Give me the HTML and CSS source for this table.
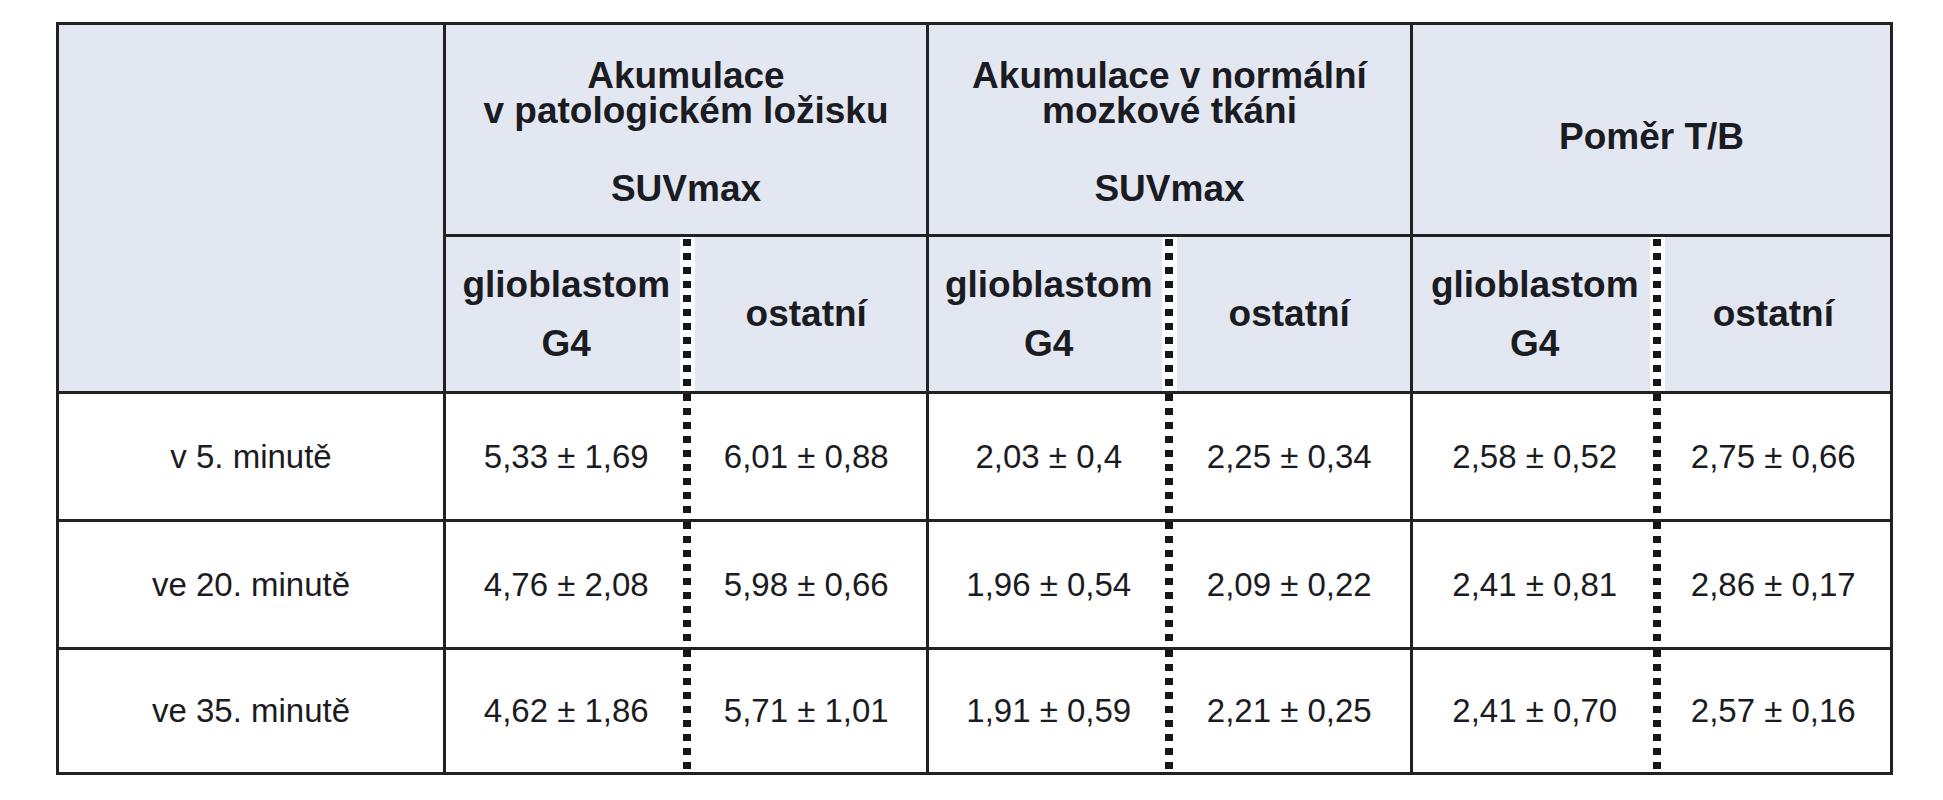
FILE: index.html
```html
<!DOCTYPE html>
<html lang="cs">
<head>
<meta charset="utf-8">
<title>Tabulka SUVmax</title>
<link rel="stylesheet" href="styles.css">
</head>
<body>
<table class="tbl">
  <colgroup>
    <col class="c-label">
    <col class="c-a"><col class="c-b">
    <col class="c-c"><col class="c-d">
    <col class="c-e"><col class="c-f">
  </colgroup>
  <thead>
    <tr class="h1">
      <th class="corner" rowspan="2"></th>
      <th class="grp" colspan="2">
        <span class="grp-title">Akumulace<br>v patologickém ložisku</span>
        <span class="grp-unit">SUVmax</span>
      </th>
      <th class="grp" colspan="2">
        <span class="grp-title">Akumulace v normální<br>mozkové tkáni</span>
        <span class="grp-unit">SUVmax</span>
      </th>
      <th class="grp grp-ratio" colspan="2">Poměr T/B</th>
    </tr>
    <tr class="h2">
      <th class="sub sub-l"><span class="two">glioblastom<br>G4</span></th>
      <th class="sub sub-r">ostatní</th>
      <th class="sub sub-l"><span class="two">glioblastom<br>G4</span></th>
      <th class="sub sub-r">ostatní</th>
      <th class="sub sub-l"><span class="two">glioblastom<br>G4</span></th>
      <th class="sub sub-r">ostatní</th>
    </tr>
  </thead>
  <tbody>
    <tr class="row">
      <td class="label">v 5. minutě</td>
      <td class="val val-l">5,33 ± 1,69</td>
      <td class="val val-r">6,01 ± 0,88</td>
      <td class="val val-l">2,03 ± 0,4</td>
      <td class="val val-r">2,25 ± 0,34</td>
      <td class="val val-l">2,58 ± 0,52</td>
      <td class="val val-r">2,75 ± 0,66</td>
    </tr>
    <tr class="row">
      <td class="label">ve 20. minutě</td>
      <td class="val val-l">4,76 ± 2,08</td>
      <td class="val val-r">5,98 ± 0,66</td>
      <td class="val val-l">1,96 ± 0,54</td>
      <td class="val val-r">2,09 ± 0,22</td>
      <td class="val val-l">2,41 ± 0,81</td>
      <td class="val val-r">2,86 ± 0,17</td>
    </tr>
    <tr class="row row-last">
      <td class="label">ve 35. minutě</td>
      <td class="val val-l">4,62 ± 1,86</td>
      <td class="val val-r">5,71 ± 1,01</td>
      <td class="val val-l">1,91 ± 0,59</td>
      <td class="val val-r">2,21 ± 0,25</td>
      <td class="val val-l">2,41 ± 0,70</td>
      <td class="val val-r">2,57 ± 0,16</td>
    </tr>
  </tbody>
</table>
</body>
</html>
```

FILE: styles.css
```css
html, body {
  margin: 0;
  padding: 0;
  background: #ffffff;
}

body {
  padding: 22px 0 0 56px;
  font-family: "Liberation Sans", Arial, sans-serif;
  color: #1b1b22;
}

.tbl {
  border-collapse: collapse;
  table-layout: fixed;
  width: 1834px;
  border: 3px solid #222224;
}

.c-label { width: 387px; }
.c-a { width: 242px; }
.c-b { width: 241px; }
.c-c { width: 241px; }
.c-d { width: 243px; }
.c-e { width: 245px; }
.c-f { width: 235px; }

.tbl th,
.tbl td {
  border: 3px solid #222224;
  padding: 0;
  text-align: center;
  vertical-align: middle;
}

/* header */
.tbl thead th {
  background-color: #e3e7f2;
  font-weight: bold;
  font-size: 37px;
}

.h1 { height: 212px; }
.h1 th { padding-top: 4px; }

.grp-title {
  display: block;
  line-height: 35px;
}

.grp-unit {
  display: block;
  line-height: 35px;
  margin-top: 43px;
}

.tbl thead th.grp-ratio {
  padding-top: 14px;
  line-height: 40px;
}

.h2 { height: 157px; }

.two {
  display: block;
  line-height: 59px;
}

.sub { line-height: 40px; }

/* dotted separators between the two sub-columns */
.tbl .sub-l,
.tbl .val-l {
  border-right-style: hidden;
}

.tbl .sub-r,
.tbl .val-r {
  border-left-style: hidden;
}

.tbl thead th.sub-l {
  background-image:
    repeating-linear-gradient(to bottom, #161616 0 7px, transparent 7px 14px),
    linear-gradient(#ffffff, #ffffff);
  background-size: 4px 100%, 7px 100%;
  background-position: right top 2px, right top;
  background-repeat: no-repeat;
}

.tbl thead th.sub-r {
  background-image:
    repeating-linear-gradient(to bottom, #161616 0 7px, transparent 7px 14px),
    linear-gradient(#ffffff, #ffffff);
  background-size: 4px 100%, 8px 100%;
  background-position: left top 2px, left top;
  background-repeat: no-repeat;
}

/* body */
.row { height: 128px; }
.row-last { height: 125px; }

.tbl td {
  font-size: 33px;
  font-weight: normal;
  background-color: #ffffff;
}

.tbl td.val-l {
  background-image:
    repeating-linear-gradient(to bottom, #161616 0 7px, transparent 7px 14px);
  background-size: 4px 100%;
  background-position: right top;
  background-repeat: no-repeat;
}

.tbl td.val-r {
  background-image:
    repeating-linear-gradient(to bottom, #161616 0 7px, transparent 7px 14px);
  background-size: 4px 100%;
  background-position: left top;
  background-repeat: no-repeat;
}

.val {
  padding-right: 16px;
}

.tbl td.val-r {
  padding-left: 0;
}

.label {
  padding-top: 8px;
}
```
